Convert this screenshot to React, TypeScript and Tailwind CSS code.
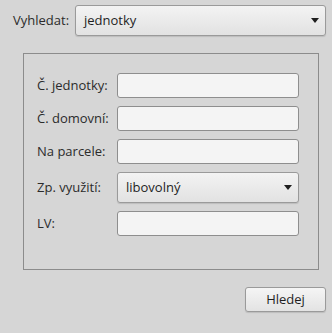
import { ReactNode } from 'react'

const font = { fontFamily: '"Open Sans", "Noto Sans", sans-serif' }

function Field({ label, children }: { label: string; children: ReactNode }) {
  return (
    <div className="flex items-center">
      <span className="w-[80px] text-[13px] text-[#2b2b2b]">{label}</span>
      {children}
    </div>
  )
}

function TextBox() {
  return <div className="h-[25px] w-[182px] rounded-[3px] border border-[#8e8e8e] bg-[#f4f4f4]" />
}

function Arrow() {
  return (
    <svg width="8" height="5" viewBox="0 0 8 5" className="shrink-0">
      <path d="M0 0h8L4 5z" fill="#1e1e1e" />
    </svg>
  )
}

function Combo({ value, className }: { value: string; className: string }) {
  return (
    <div
      className={
        'flex h-[31px] items-center justify-between rounded-[3px] border border-[#9a9a9a] bg-gradient-to-b from-[#f3f3f3] to-[#e2e2e2] pl-[8px] pr-[6px] text-[13px] text-[#1f1f1f] shadow-[0_1px_1px_rgba(0,0,0,0.12)] ' +
        className
      }
    >
      <span>{value}</span>
      <Arrow />
    </div>
  )
}

export default function App() {
  return (
    <div className="h-[333px] w-[332px] bg-[#d6d6d6]" style={font}>
      <div className="flex items-center pl-[13px] pr-[6px] pt-[5px]">
        <span className="w-[62px] text-[13px] text-[#2b2b2b]">Vyhledat:</span>
        <Combo value="jednotky" className="flex-1" />
      </div>

      <div className="ml-[23px] mt-[17px] flex h-[217px] w-[296px] flex-col gap-[8px] border border-[#8c8c8c] pl-[13px] pt-[19px]">
        <Field label="Č. jednotky:">
          <TextBox />
        </Field>
        <Field label="Č. domovní:">
          <TextBox />
        </Field>
        <Field label="Na parcele:">
          <TextBox />
        </Field>
        <Field label="Zp. využití:">
          <Combo value="libovolný" className="w-[182px]" />
        </Field>
        <Field label="LV:">
          <TextBox />
        </Field>
      </div>

      <div className="flex justify-end pr-[6px] pt-[17px]">
        <button className="h-[25px] w-[81px] rounded-[3px] border border-[#9a9a9a] bg-gradient-to-b from-[#f5f5f5] to-[#e3e3e3] text-[13px] text-[#1f1f1f] shadow-[0_1px_1px_rgba(0,0,0,0.12)]">
          Hledej
        </button>
      </div>
    </div>
  )
}
